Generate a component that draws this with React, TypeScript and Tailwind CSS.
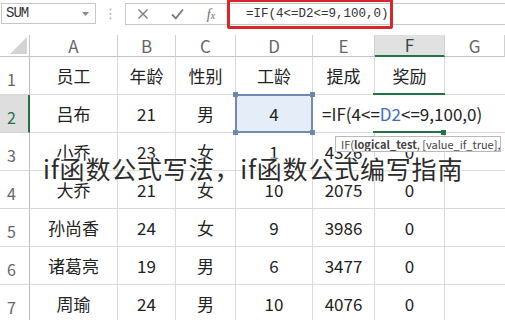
import React from "react";

const rows: string[][] = [
  ["员工", "年龄", "性别", "工龄", "提成", "奖励"],
  ["吕布", "21", "男", "4", "", ""],
  ["小乔", "23", "女", "1", "4326", "0"],
  ["大乔", "21", "女", "10", "2075", "0"],
  ["孙尚香", "24", "女", "9", "3986", "0"],
  ["诸葛亮", "19", "男", "6", "3477", "0"],
  ["周瑜", "24", "男", "10", "4076", "0"],
];

const letters = ["A", "B", "C", "D", "E", "F", "G"];

function FormulaBar() {
  return (
    <div className="relative h-[35px] flex items-start pt-[3px]">
      <div className="ml-[1px] w-[95px] h-[21px] border border-[#c6c6c6] flex items-center justify-between pl-[4px] pr-[6px]">
        <span className="text-[14px] tracking-[-1px] text-[#333] font-['Liberation_Mono',monospace]">SUM</span>
        <svg width="7" height="4" viewBox="0 0 7 4">
          <path d="M0 0h7L3.5 4z" fill="#8a8a8a" />
        </svg>
      </div>
      <div className="w-[29px] h-[21px] flex items-center justify-center">
        <svg width="3" height="12" viewBox="0 0 3 12">
          <circle cx="1.5" cy="1.5" r="1" fill="#b0b0b0" />
          <circle cx="1.5" cy="6" r="1" fill="#b0b0b0" />
          <circle cx="1.5" cy="10.5" r="1" fill="#b0b0b0" />
        </svg>
      </div>
      <div className="flex-1 h-[22px] border border-r-0 border-[#c6c6c6] flex items-center">
        <div className="w-[34px] flex justify-center">
          <svg width="12" height="12" viewBox="0 0 12 12">
            <path d="M1.5 1.5l9 9M10.5 1.5l-9 9" stroke="#7a7a7a" strokeWidth="1.4" />
          </svg>
        </div>
        <div className="w-[34px] flex justify-center">
          <svg width="13" height="12" viewBox="0 0 13 12">
            <path d="M1 6.5l3.8 3.8L12 1.5" stroke="#7a7a7a" strokeWidth="1.8" fill="none" />
          </svg>
        </div>
        <div className="w-[34px] flex justify-center">
          <span className="italic text-[14px] text-[#6e6e6e] font-['Liberation_Serif',serif]">
            f<span className="text-[10px]">x</span>
          </span>
        </div>
        <span className="ml-[18px] text-[12.5px] text-[#333] font-['Liberation_Mono',monospace]">
          =IF(4&lt;=D2&lt;=9,100,0)
        </span>
      </div>
      <div className="absolute left-[227px] top-[-1px] w-[166px] h-[30px] border-[3px] border-[#d8262b] rounded-[2px]" />
    </div>
  );
}

function Corner({ className }: { className: string }) {
  return <div className={`absolute w-[5px] h-[5px] bg-[#6a87b0] ${className}`} />;
}

function Cell({ r, c, text }: { r: number; c: number; text: string }) {
  const base =
    "flex items-center justify-center border-r border-b border-[#dadada] text-[17px] text-[#222]";
  if (r === 1 && c === 3) {
    return (
      <div className={`${base} relative bg-[#e5edf8]`}>
        <div className="absolute inset-[-1px] border-2 border-[#6f8bb3]" />
        <Corner className="left-[-3px] top-[-3px]" />
        <Corner className="right-[-3px] top-[-3px]" />
        <Corner className="left-[-3px] bottom-[-3px]" />
        <Corner className="right-[-3px] bottom-[-3px]" />
        <span className="relative">{text}</span>
      </div>
    );
  }
  if (r === 1 && c === 5) {
    return (
      <div className={`${base} relative`}>
        <div className="absolute left-[-58px] right-[-60px] top-0 bottom-0 bg-white flex items-center pl-[5px] z-10">
          <span className="whitespace-nowrap">
            =IF(4&lt;=<span className="text-[#3a6cc4]">D2</span>&lt;=9,100,0)
          </span>
        </div>
        <div className="absolute left-[-2px] w-[72px] top-[-2px] h-[2px] bg-[#217346] z-20" />
        <div className="absolute left-[-2px] w-[70px] bottom-[-1px] h-[2px] bg-[#217346] z-20" />
        <div className="absolute left-[66px] bottom-[-3px] w-[5px] h-[5px] bg-[#217346] z-20" />
        <div className="absolute left-[-40px] top-[41px] w-[166px] h-[16px] bg-white border border-[#b9b9b9] overflow-hidden whitespace-nowrap text-[11px] leading-[14px] text-[#444] pl-[5px] z-20">
          IF(<span className="font-bold">logical_test</span>, [value_if_true], [value_if_false])
        </div>
      </div>
    );
  }
  return <div className={base}>{text}</div>;
}

export default function App() {
  return (
    <div className="relative w-[505px] h-[320px] overflow-hidden bg-white font-['Noto_Sans_CJK_SC','Noto_Sans',sans-serif]">
      <FormulaBar />
      <div className="grid grid-cols-[30px_88px_58px_60px_77px_62px_70px_60px] grid-rows-[22px_repeat(7,38px)]">
        <div className="border-r border-b border-[#c4c4c4]">
          <svg width="29" height="21" viewBox="0 0 29 21">
            <path d="M27 2V19H10z" fill="#d3d3d3" />
          </svg>
        </div>
        {letters.map((l) =>
          l === "F" ? (
            <div
              key={l}
              className="flex items-center justify-center bg-[#e1e1e1] border-r border-[#d0d0d0] border-b-2 border-b-[#217346] text-[17px] text-[#2f4a3a]"
            >
              {l}
            </div>
          ) : (
            <div
              key={l}
              className="flex items-center justify-center border-r border-b border-[#d0d0d0] border-b-[#c4c4c4] text-[17px] text-[#666]"
            >
              {l}
            </div>
          )
        )}
        {rows.map((row, r) => (
          <React.Fragment key={r}>
            {r === 1 ? (
              <div className="flex items-center pl-[7px] pt-[6px] bg-[#dedede] border-r-2 border-r-[#217346] border-b border-[#d4d4d4] text-[16px] text-[#217346]">
                {r + 1}
              </div>
            ) : (
              <div className="flex items-center pl-[7px] pt-[6px] border-r border-r-[#bdbdbd] border-b border-[#dadada] text-[16px] text-[#666]">
                {r + 1}
              </div>
            )}
            {row.map((t, c) => (
              <Cell key={c} r={r} c={c} text={t} />
            ))}
            <div className="border-b border-[#dadada]" />
          </React.Fragment>
        ))}
      </div>
      <div className="absolute left-[43px] top-[156px] z-30 whitespace-nowrap text-[25px] tracking-[0.8px] leading-none text-[#2b2b2b] [text-shadow:0_0_2px_#fff,0_0_2px_#fff,0_0_3px_#fff]">
        if函数公式写法，if函数公式编写指南
      </div>
    </div>
  );
}
